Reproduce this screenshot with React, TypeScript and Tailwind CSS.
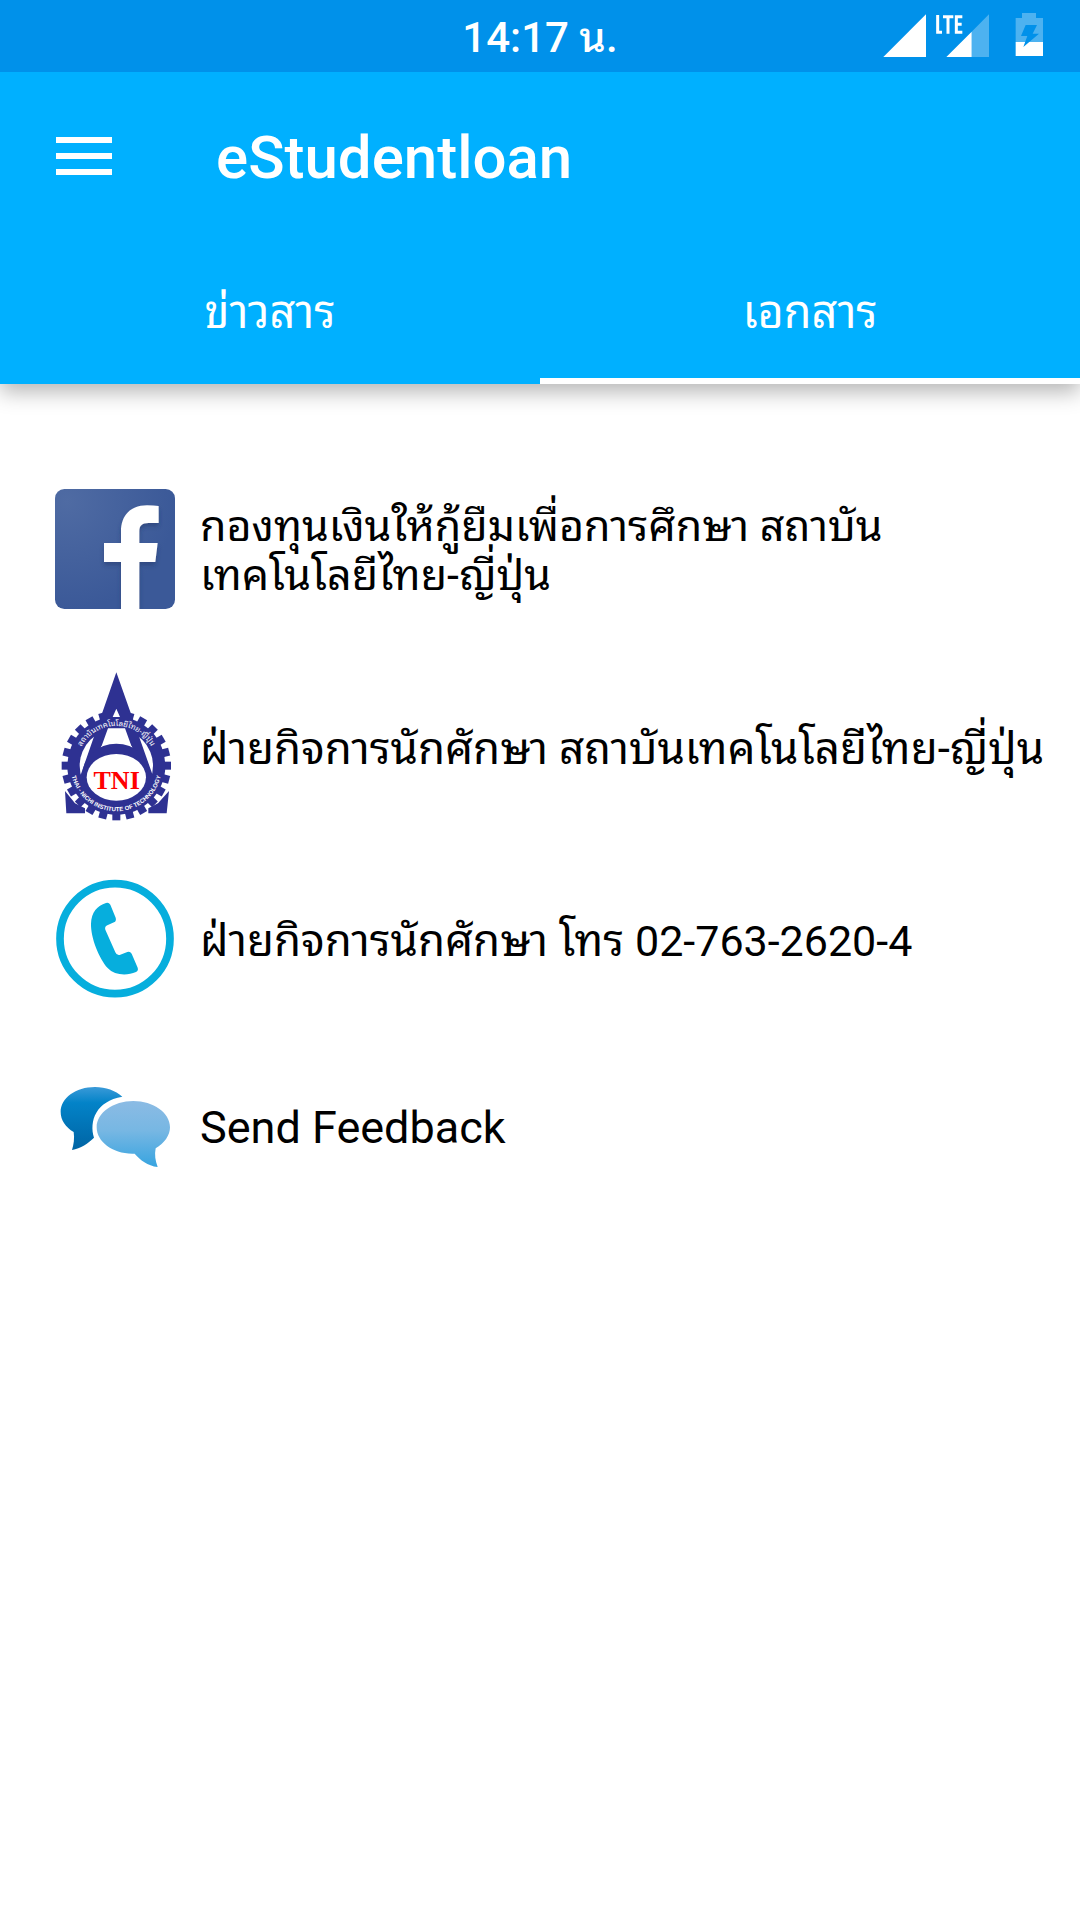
import type { ReactNode } from 'react';

const teeth = Array.from({ length: 24 }, (_, i) => i * 15);

function FacebookIcon() {
  return (
    <svg viewBox="0 0 360 360" className="h-[120px] w-[120px]" aria-hidden="true">
      <defs>
        <radialGradient id="fb" cx="0.1" cy="0.1" r="0.9">
          <stop offset="0" stopColor="#4f6ba3" />
          <stop offset="1" stopColor="#3b5998" />
        </radialGradient>
        <filter id="fbs" x="-20%" y="-20%" width="140%" height="140%">
          <feDropShadow dx="0" dy="10" stdDeviation="6" floodColor="#1d3468" floodOpacity="0.5" />
        </filter>
        <clipPath id="fbc"><rect width="360" height="360" rx="28" /></clipPath>
      </defs>
      <rect width="360" height="360" rx="28" fill="url(#fb)" />
      <g clipPath="url(#fbc)">
        <path filter="url(#fbs)" fill="#fff" d="M198 365V219H147V162H198V128C198 78 228 49 276 49Q297 49 311 51V102H280C260 102 253 111 253 127V162H308L301 219H253V365Z" />
      </g>
    </svg>
  );
}

function TniIcon() {
  return (
    <svg viewBox="45 36 360 450" className="h-[150px] w-[120px]" aria-hidden="true">
      <defs>
        <path id="arcTop" d="M110 317A119 119 0 0 1 348 317" />
        <path id="arcBottom" d="M92 317A137 137 0 0 0 366 317" />
      </defs>
      <g fill="#2e3192">
        {teeth.map((a) => (
          <rect key={a} x="217" y="153" width="24" height="34" transform={`rotate(${a} 229 317)`} />
        ))}
        <path d="M75 393L105 430L135 445V460H79Z" />
        <path d="M387 393L354 430L325 445V460H380Z" />
        <circle cx="229" cy="317" r="147" />
      </g>
      <circle cx="229" cy="317" r="110" fill="#fff" />
      <path fill="#2e3192" d="M229 37L352 385H322L275 258H184L140 385H108Z" />
      <path fill="#fff" d="M229 146L240 171H218ZM204 205H255L275 260H184Z" />
      <ellipse cx="229" cy="345" rx="102" ry="94" fill="#2e3192" />
      <ellipse cx="229" cy="352" rx="89" ry="70" fill="#fff" />
      <g fill="#fff">
        <text fontSize="23" fontFamily="Noto Sans Thai Looped, Noto Sans Thai, Roboto, sans-serif">
          <textPath href="#arcTop" startOffset="50%" textAnchor="middle">สถาบันเทคโนโลยีไทย-ญี่ปุ่น</textPath>
        </text>
        <text fontSize="18" fontFamily="Liberation Sans, sans-serif" className="font-bold">
          <textPath href="#arcBottom" startOffset="50%" textAnchor="middle">THAI - NICHI INSTITUTE OF TECHNOLOGY</textPath>
        </text>
      </g>
      <text x="230" y="388" textAnchor="middle" fontSize="78" fontFamily="Liberation Serif, serif" className="font-bold" fill="#ff0000">TNI</text>
    </svg>
  );
}

function PhoneIcon() {
  return (
    <svg viewBox="45 42 360 360" className="h-[120px] w-[120px]" aria-hidden="true">
      <circle cx="225" cy="221" r="165" fill="none" stroke="#06aedd" strokeWidth="23" />
      <path fill="#06aedd" d="M198 114Q206 111 211 119L227 158Q230 168 222 172L202 181Q193 185 196 194L226 262Q230 272 239 270L262 261Q270 258 275 266L293 308Q296 317 288 321C260 333 224 331 203 309C177 280 152 218 153 176C154 142 172 122 198 114Z" />
    </svg>
  );
}

function FeedbackIcon() {
  return (
    <svg viewBox="45 -15 360 360" className="h-[120px] w-[120px]" aria-hidden="true">
      <defs>
        <linearGradient id="b1" x1="0" y1="0" x2="0" y2="1">
          <stop offset="0" stopColor="#3a9ad8" />
          <stop offset="0.25" stopColor="#0383c8" />
          <stop offset="1" stopColor="#0064a4" />
        </linearGradient>
        <linearGradient id="b2" x1="0" y1="0" x2="0" y2="1">
          <stop offset="0" stopColor="#8bbbe4" />
          <stop offset="0.45" stopColor="#77b7e3" />
          <stop offset="1" stopColor="#37a4e0" />
        </linearGradient>
      </defs>
      <path fill="url(#b1)" d="M247 80C226 62 198 51 165 51C107 51 62 84 62 126C62 151 77 172 101 186C104 206 101 224 96 240C122 235 145 220 162 203C147 153 168 93 247 80Z" />
      <path fill="url(#b2)" d="M280 93C340 93 390 128 390 172C390 196 373 220 347 235C343 254 346 273 353 291C323 287 300 270 284 251C220 254 170 216 170 172C170 128 220 93 280 93Z" />
    </svg>
  );
}

function Row({ icon, className, children }: { icon: ReactNode; className: string; children: ReactNode }) {
  return (
    <li>
      <a href="#" className={`flex w-full items-center gap-[25px] pr-5 pl-[55px] ${className}`}>
        <span className="shrink-0">{icon}</span>
        <span className="pt-1">{children}</span>
      </a>
    </li>
  );
}

export default function App() {
  return (
    <div className="min-h-screen bg-white font-['Roboto','Noto_Sans_Thai_Looped','Noto_Sans_Thai','Noto_Sans',sans-serif] text-black">
      <div className="relative z-10 flex h-[72px] items-center justify-center bg-[#0091ea] pt-1 text-[42px] leading-[48px] font-medium text-white">
        <time>14:17 น.</time>
        <svg viewBox="0 0 660 216" className="absolute top-0 right-0 h-[72px] w-[220px]" aria-hidden="true">
          <path fill="#fff" d="M70 171L198 43V171Z" />
          <path fill="#4db2f0" d="M335 95L387 43V171H335ZM486 39H528V54H549V127H467V54H486Z" />
          <path fill="#fff" d="M259 171L335 95V171ZM467 126H549V168H467Z" />
          <path fill="#0091ea" d="M497 75H531L518 101H537L490 141L502 108H483Z" />
          <path fill="none" stroke="#fff" strokeWidth="9" d="M233 45V97H246M249 50H280M264 50V101M307 50H289V97H307M289 73H305" />
        </svg>
      </div>
      <header className="relative bg-[#00b0ff] text-white shadow-[0_8px_20px_rgba(0,0,0,0.29)]">
        <div className="flex h-[168px] items-center gap-[104px] pl-14">
          <button type="button" aria-label="Menu" className="flex w-14 flex-col gap-[10px]">
            <span className="h-[6px] w-full bg-white" />
            <span className="h-[6px] w-full bg-white" />
            <span className="h-[6px] w-full bg-white" />
          </button>
          <h1 className="pt-1 text-[60px] leading-[72px] font-medium">eStudentloan</h1>
        </div>
        <nav role="tablist" className="grid grid-cols-2 text-[45px] leading-[48px]">
          <button type="button" role="tab" aria-selected="false" className="h-36 border-b-[6px] border-transparent pt-2">ข่าวสาร</button>
          <button type="button" role="tab" aria-selected="true" className="h-36 border-b-[6px] border-white pt-2">เอกสาร</button>
        </nav>
      </header>
      <ul className="pt-[75px] leading-[49px]">
        <Row icon={<FacebookIcon />} className="min-h-[180px] text-[43px]">
          กองทุนเงินให้กู้ยืมเพื่อการศึกษา สถาบัน
          <br />
          เทคโนโลยีไทย-ญี่ปุ่น
        </Row>
        <Row icon={<TniIcon />} className="min-h-[216px] text-[44px]">ฝ่ายกิจการนักศักษา สถาบันเทคโนโลยีไทย-ญี่ปุ่น</Row>
        <Row icon={<PhoneIcon />} className="min-h-[168px] text-[44px]">
          ฝ่ายกิจการนักศักษา โทร <span className="text-[43px]">02-763-2620-4</span>
        </Row>
        <Row icon={<FeedbackIcon />} className="min-h-[204px] text-[45px]">Send Feedback</Row>
      </ul>
    </div>
  );
}
